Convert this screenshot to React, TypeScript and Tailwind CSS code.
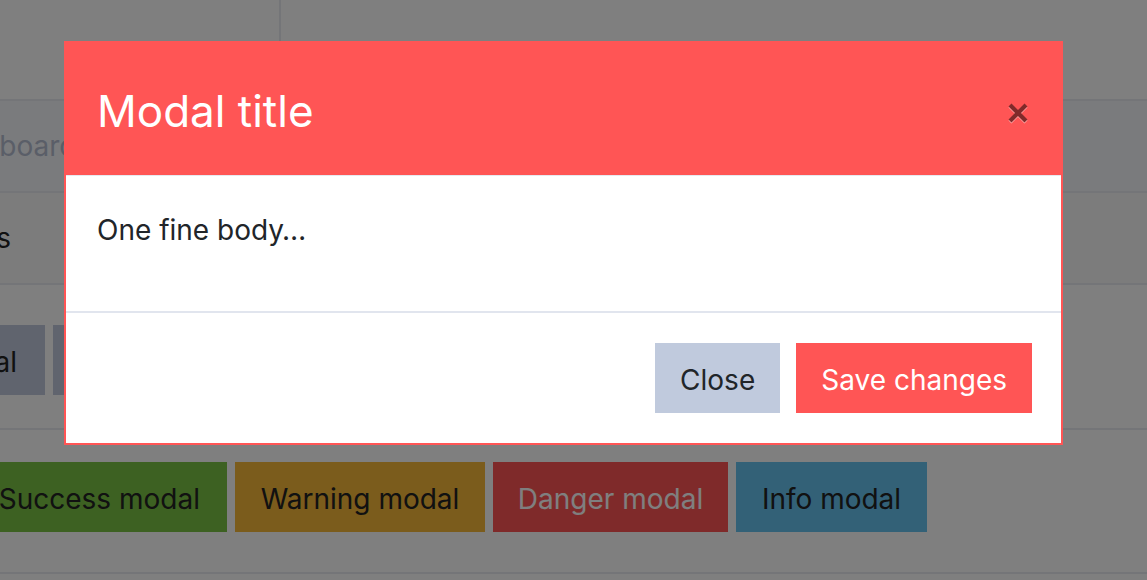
import React from "react";

export default function App() {
  return (
    <div
      className="relative w-[1147px] h-[580px] overflow-hidden bg-white text-[#222]"
      style={{ fontFamily: "Inter, 'Noto Sans', sans-serif" }}
    >
      {/* page behind the overlay */}
      <div className="flex flex-col">
        <div className="flex h-[101px] border-b-2 border-[#e8eaf0]">
          <div className="w-[281px] border-r-2 border-[#e8eaf0]" />
          <div className="flex-1" />
        </div>
        <div className="flex h-[92px] items-center border-b-2 border-[#e8eaf0] bg-[#f5f6fa]">
          <span className="-ml-[68px] whitespace-nowrap text-[28px] leading-[42px] text-[#b5bdd0]">
            Dashboard
          </span>
        </div>
        <div className="flex h-[92px] items-center border-b-2 border-[#e8eaf0] bg-[#f8f8f9]">
          <div className="flex w-[11px] justify-end overflow-hidden">
            <span className="whitespace-nowrap text-[28px] leading-[42px] text-[#222]">Modals</span>
          </div>
        </div>
        <div className="flex h-[145px] gap-[8px] border-b-2 border-[#e8eaf0] pt-[40px]">
          <button className="flex h-[70px] w-[45px] shrink-0 items-center justify-end overflow-hidden bg-[#c0c8dc] pr-[28px] pt-[4px] text-[28px] leading-[42px] text-[#222]">
            <span className="whitespace-nowrap">Default modal</span>
          </button>
          <button className="h-[70px] w-[200px] shrink-0 bg-[#c0c8dc]" />
        </div>
        <div className="flex h-[144px] gap-[8px] border-b-2 border-[#e8eaf0] pt-[32px]">
          <button className="flex h-[70px] w-[227px] shrink-0 items-center justify-end overflow-hidden bg-[#7ac244] pr-[27px] pt-[4px] text-[28px] leading-[42px] text-[#222]">
            <span className="whitespace-nowrap">Success modal</span>
          </button>
          <button className="h-[70px] w-[250px] shrink-0 bg-[#f6b838] pt-[4px] text-[28px] leading-[42px] text-[#222]">
            Warning modal
          </button>
          <button className="h-[70px] w-[235px] shrink-0 bg-[#ff5555] pt-[4px] text-[28px] leading-[42px] text-white">
            Danger modal
          </button>
          <button className="h-[70px] w-[191px] shrink-0 bg-[#66c2ee] pt-[4px] text-[28px] leading-[42px] text-[#222]">
            Info modal
          </button>
        </div>
      </div>

      {/* backdrop */}
      <div className="absolute inset-0 bg-black/50" />

      {/* modal */}
      <div className="absolute left-[64px] top-[41px] w-[999px] border-2 border-[#ff5555] bg-white">
        <div className="flex items-center justify-between border-b border-[#e6e9f0] bg-[#ff5555] pb-[32px] pl-[31px] pr-[32px] pt-[37px]">
          <h5 className="text-[44px] leading-[63px] font-normal text-white">Modal title</h5>
          <svg width="22" height="22" viewBox="0 0 22 22" className="mt-[2px]">
            <g strokeWidth="4.2" strokeLinecap="butt">
              <path d="M3 4 L19 20 M19 4 L3 20" stroke="#ffaaaa" />
              <path d="M3 3 L19 19 M19 3 L3 19" stroke="#802a2a" />
            </g>
          </svg>
        </div>
        <div className="h-[135px] px-[31px] pt-[33px]">
          <p className="text-[28px] leading-[42px] text-[#212529]">One fine body…</p>
        </div>
        <div className="flex justify-end gap-[16px] border-t-2 border-[#e1e5ee] px-[29px] pb-[30px] pt-[30px]">
          <button className="h-[70px] bg-[#c0cadd] px-[25px] pt-[4px] text-[28px] leading-[42px] text-[#212529]">
            Close
          </button>
          <button className="h-[70px] bg-[#ff5555] px-[25px] pt-[4px] text-[28px] leading-[42px] text-white">
            Save changes
          </button>
        </div>
      </div>
    </div>
  );
}
